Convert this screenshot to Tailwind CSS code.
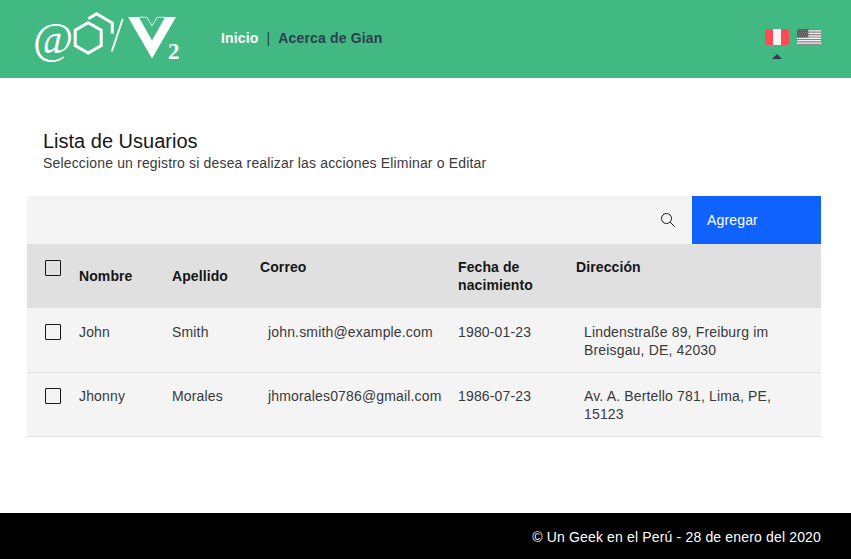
<!DOCTYPE html>
<html lang="es">
<head>
<meta charset="utf-8">
<title>Lista de Usuarios</title>
<script src="https://cdn.jsdelivr.net/npm/@tailwindcss/browser@4"></script>
</head>
<body class="flex min-h-screen flex-col bg-white font-['Liberation_Sans',Arial,sans-serif] text-sm leading-[18px] tracking-[0.16px] text-[#393939]">
<header class="flex h-[78px] items-start bg-[#42b983]">
  <svg class="ml-[25px] h-[78px] w-[170px]" viewBox="25 0 170 78" fill="none">
    <text transform="translate(32.8 52.500) scale(.97 1)" font-family="Liberation Serif" font-style="italic" font-size="45" letter-spacing="0" fill="#fff">@</text>
    <path d="M88.200 22.800 L101.200 30.200 V45.600 L88.200 53 L75.200 45.600 V30.200 Z" stroke="#fff" stroke-width="3"/>
    <path d="M88.400 18.800 L96.600 13.800 L112.300 23 V33.500" stroke="#fff" stroke-width="3"/>
    <path d="M122.700 19 L111.800 51.500" stroke="#fff" stroke-width="1.900"/>
    <path d="M128 17 H138.800 L152 40.500 L165.200 17 H176 L152 58.500 Z" fill="#fff"/>
    <path d="M138 17.300 H146.800 L152 25.800 L157.200 17.300 H166" stroke="#fff" stroke-width=".8"/>
    <text x="168" y="59" font-family="Liberation Serif" font-weight="bold" font-size="23" letter-spacing="0" fill="#fff">2</text>
  </svg>
  <nav class="mt-[29px] ml-[26px] flex font-bold text-[#2c3e50]">
    <a class="text-white">Inicio</a><span class="mx-2 font-normal">|</span><a>Acerca de Gian</a>
  </nav>
  <div class="mt-[29px] mr-[30px] ml-auto flex gap-2">
    <div class="flex flex-col items-center">
      <svg class="h-4 w-6" viewBox="0 0 24 16"><rect width="24" height="16" rx="2" fill="#ff4b55"/><path d="M8 0h8v16H8z" fill="#f5f5f5"/></svg>
      <svg class="mt-[9px] h-[5px] w-[10px]" viewBox="0 0 10 5"><path d="M0 5 L5 0 L10 5Z" fill="#2c3e50"/></svg>
    </div>
    <svg class="h-4 w-6" viewBox="0 0 24 16">
      <rect width="24" height="16" rx="1.500" fill="#f0f0f0"/>
      <path d="M.5 .7h23M0 3.100h24M0 5.600h24M0 8h24M0 10.500h24M0 12.900h24M.5 15.300h23" stroke="#868686" stroke-width="1.230"/>
      <path d="M1 0h10.300v8.600H0V1z" fill="#5c5c5c"/>
      <path d="M1 1.500h10M2 3.500h9M1 5.500h10M2 7.300h9" stroke="#858585" stroke-width=".9" stroke-dasharray="1 1"/>
    </svg>
  </div>
</header>
<main class="mx-[27px] mr-[30px] mt-[51px]">
  <div class="pl-4">
    <h1 class="mb-px text-xl leading-[24px] tracking-normal text-[#161616]">Lista de Usuarios</h1>
    <p>Seleccione un registro si desea realizar las acciones Eliminar o Editar</p>
  </div>
  <div class="mt-6 flex h-12 bg-[#f4f4f4]">
    <div class="ml-auto flex w-12 items-center justify-center">
      <svg class="h-4 w-4" viewBox="0 0 16 16" fill="none" stroke="#161616"><circle cx="6.500" cy="6.500" r="5" /><path d="M10.200 10.200 L14.700 14.700"/></svg>
    </div>
    <button class="w-[129px] bg-[#0f62fe] pl-[15px] text-left tracking-[0.16px] text-white">Agregar</button>
  </div>
  <table class="w-full table-fixed border-separate border-spacing-0 text-left">
    <colgroup><col class="w-[52px]"><col class="w-[93px]"><col class="w-[88px]"><col class="w-[198px]"><col class="w-[118px]"><col></colgroup>
    <thead class="bg-[#e0e0e0] tracking-[0.1px] text-[#161616]">
      <tr class="h-16 align-top">
        <th class="pt-4 pl-[18px]"><div class="h-4 w-4 rounded-[1px] border border-[#161616]"></div></th>
        <th class="align-middle">Nombre</th>
        <th class="align-middle">Apellido</th>
        <th class="pt-[14px]">Correo</th>
        <th class="pt-[14px] pr-8">Fecha de nacimiento</th>
        <th class="pt-[14px]">Dirección</th>
      </tr>
    </thead>
    <tbody class="bg-[#f4f4f4] [&_td]:border-b [&_td]:border-[#e0e0e0]">
      <tr class="h-[65px] align-top">
        <td class="pt-4 pl-[18px]"><div class="h-4 w-4 rounded-[1px] border border-[#161616]"></div></td>
        <td class="pt-[15px]">John</td><td class="pt-[15px]">Smith</td><td class="pt-[15px] pl-2">john.smith@example.com</td><td class="pt-[15px]">1980-01-23</td>
        <td class="pt-[15px] pr-10 pl-2">Lindenstraße 89, Freiburg im Breisgau, DE, 42030</td>
      </tr>
      <tr class="h-16 align-top">
        <td class="pt-[15px] pl-[18px]"><div class="h-4 w-4 rounded-[1px] border border-[#161616]"></div></td>
        <td class="pt-[14px]">Jhonny</td><td class="pt-[14px]">Morales</td><td class="pt-[14px] pl-2">jhmorales0786@gmail.com</td><td class="pt-[14px]">1986-07-23</td>
        <td class="pt-[14px] pr-10 pl-2">Av. A. Bertello 781, Lima, PE, 15123</td>
      </tr>
    </tbody>
  </table>
</main>
<footer class="mt-auto flex h-[46px] items-center justify-end bg-black pt-[2px] pr-[30px] text-white">© Un Geek en el Perú - 28 de enero del 2020</footer>
</body>
</html>
